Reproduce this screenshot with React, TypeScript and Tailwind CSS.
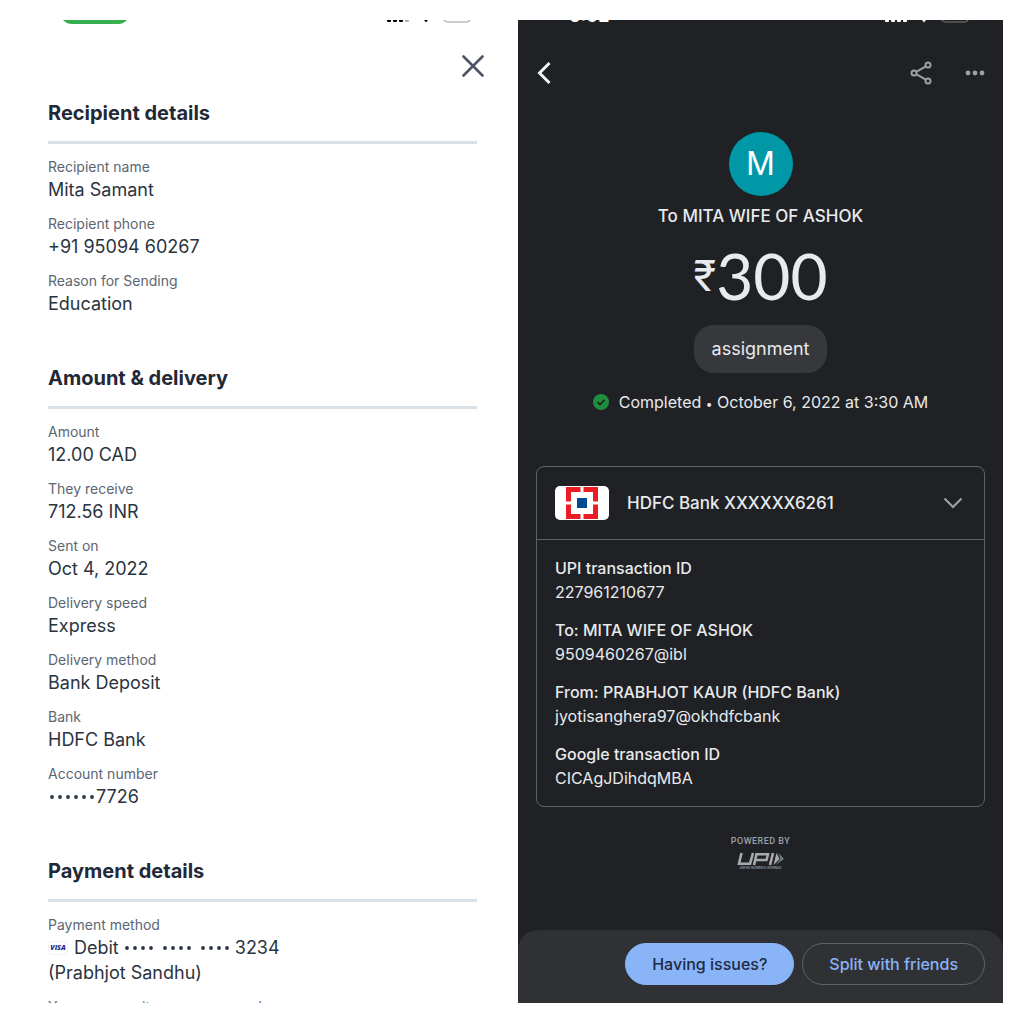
import type { ReactNode } from "react";

type Row = { label: string; value?: ReactNode };

const recipient: Row[] = [
  { label: "Recipient name", value: "Mita Samant" },
  { label: "Recipient phone", value: "+91 95094 60267" },
  { label: "Reason for Sending", value: "Education" },
];

const amount: Row[] = [
  { label: "Amount", value: "12.00 CAD" },
  { label: "They receive", value: "712.56 INR" },
  { label: "Sent on", value: "Oct 4, 2022" },
  { label: "Delivery speed", value: "Express" },
  { label: "Delivery method", value: "Bank Deposit" },
  { label: "Bank", value: "HDFC Bank" },
  {
    label: "Account number",
    value: (
      <span className="flex items-center">
        <Dots count={6} />
        7726
      </span>
    ),
  },
];

const payment: Row[] = [
  {
    label: "Payment method",
    value: (
      <>
        <span className="flex items-center">
          <span className="mr-1.5 flex h-3.5 w-5 items-center justify-center rounded-sm border border-[#f3f3f8] font-['Open_Sans'] text-[7px] leading-none font-extrabold text-[#28288c] italic">
            VISA
          </span>
          <span className="mr-1">Debit</span>
          <Dots count={4} />
          <span className="w-1.5" />
          <Dots count={4} />
          <span className="w-1.5" />
          <Dots count={4} />
          <span className="ml-1">3234</span>
        </span>
        <span className="block">(Prabhjot Sandhu)</span>
      </>
    ),
  },
  { label: "Your name as it appears on card" },
];

const transaction: Row[] = [
  { label: "UPI transaction ID", value: "227961210677" },
  { label: "To: MITA WIFE OF ASHOK", value: "9509460267@ibl" },
  { label: "From: PRABHJOT KAUR (HDFC Bank)", value: "jyotisanghera97@okhdfcbank" },
  { label: "Google transaction ID", value: "CICAgJDihdqMBA" },
];

function Dots({ count }: { count: number }) {
  return (
    <svg width={count * 8} height="8" viewBox={`0 0 ${count * 8} 8`} fill="currentColor" aria-hidden="true">
      {Array.from({ length: count }, (_, i) => (
        <circle key={i} cx={i * 8 + 4} cy="4" r="1.9" />
      ))}
    </svg>
  );
}

function StatusIcons({ full = false }: { full?: boolean }) {
  return (
    <svg width="86" height="12" viewBox="0 0 86 12" fill="currentColor" className="shrink-0" aria-hidden="true">
      <rect x="0" y="1" width="4" height="5" rx="1" />
      <rect x="6" y="0" width="4" height="6" rx="1" />
      <rect x="12" y="0" width="4" height="6" rx="1" />
      <rect x="18" y="0" width="4" height="6" rx="1" opacity={full ? 1 : 0.3} />
      <path d="M35.500 2 L42.500 2 L39 6.500 Z" />
      <rect x="56.500" y="-8" width="27" height="14" rx="4" fill="none" stroke="currentColor" opacity="0.4" />
    </svg>
  );
}

function Section({ title, rows }: { title: string; rows: Row[] }) {
  return (
    <section>
      <h2 className="border-b-3 border-[#d9e0e6] pb-3.5 text-xl leading-7 font-bold text-[#1f2937]">{title}</h2>
      <dl className="flex flex-col gap-3 pt-[13px]">
        {rows.map((row) => (
          <div key={row.label}>
            <dt className="text-sm leading-5 text-[#5b6672]">{row.label}</dt>
            {row.value && <dd className="text-lg leading-[25px] text-[#2a3440]">{row.value}</dd>}
          </div>
        ))}
      </dl>
    </section>
  );
}

function TransferPanel() {
  return (
    <main className="min-w-0 overflow-hidden bg-white px-7">
      <div className="flex h-2 items-end justify-between overflow-hidden pr-1 pl-3 text-black">
        <span className="mb-1 h-6 w-[70px] shrink-0 rounded-xl bg-[#34b04f]" />
        <StatusIcons />
      </div>
      <div className="-mr-2.5 flex justify-end pt-6">
        <button type="button" aria-label="Close" className="flex size-7 items-center justify-center text-[#4b5664]">
          <svg width="22" height="22" viewBox="0 0 22 22" fill="none" stroke="currentColor" strokeWidth="2.600" strokeLinecap="round">
            <path d="M1.500 1.500 L20.500 20.500 M20.500 1.500 L1.500 20.500" />
          </svg>
        </button>
      </div>
      <div className="flex flex-col gap-12 pt-[19px]">
        <Section title="Recipient details" rows={recipient} />
        <Section title="Amount &amp; delivery" rows={amount} />
        <Section title="Payment details" rows={payment} />
      </div>
    </main>
  );
}

function HdfcLogo() {
  return (
    <svg width="54" height="34" viewBox="0 0 54 34" className="shrink-0" aria-hidden="true">
      <rect width="54" height="34" rx="5" fill="#fff" />
      <rect x="11" y="1" width="32" height="32" fill="#ec1c24" />
      <rect x="16" y="6" width="22" height="22" fill="#fff" />
      <path d="M25.500 1 h3 v32 h-3 Z M11 15.500 h32 v3 h-32 Z" fill="#fff" />
      <rect x="22" y="12" width="10" height="10" fill="#004c8f" />
    </svg>
  );
}

function UpiLogo() {
  return (
    <svg width="50" height="15" viewBox="0 0 50 15" fill="none" role="img" aria-label="UPI">
      <g stroke="#a6a9ad" strokeWidth="2.600">
        <path d="M5.500 2 L3 12.700 H14 L17 2" />
        <path d="M18 14 L20.500 3.300 H32 L30.500 9 H20" />
        <path d="M37 2 L34 14" />
      </g>
      <path d="M40.500 2 L43.500 8 L37.500 14 Z" fill="#a6a9ad" />
      <path d="M42.500 2 L48 8 L39.500 14 L44.500 8 Z" fill="#6f8084" />
    </svg>
  );
}

function ReceiptPanel() {
  return (
    <article className="flex min-w-0 flex-col overflow-hidden bg-[#202124] text-[#e8eaed]">
      <div className="flex h-2 shrink-0 items-end justify-between overflow-hidden pr-8 pl-[51px] text-lg leading-6 font-semibold text-white">
        <span>6:02</span>
        <StatusIcons full />
      </div>
      <header className="flex shrink-0 items-center pt-[31px] pr-[18px] pl-4">
        <button type="button" aria-label="Back" className="flex h-7 w-5 items-center justify-center">
          <svg width="14" height="24" viewBox="0 0 14 24" fill="none" stroke="#f1f3f4" strokeWidth="3">
            <path d="M12.500 2 L2.500 12 L12.500 22" />
          </svg>
        </button>
        <button type="button" aria-label="Share" className="mr-8 ml-auto flex size-6 items-center justify-center text-[#9aa0a6]">
          <svg width="22" height="24" viewBox="0 0 22 24" fill="none" stroke="currentColor" strokeWidth="2">
            <circle cx="4" cy="12" r="2.500" />
            <circle cx="18" cy="4" r="2.500" />
            <circle cx="18" cy="20" r="2.500" />
            <path d="M6.200 10.800 L15.800 5.300 M6.200 13.200 L15.800 18.700" />
          </svg>
        </button>
        <button type="button" aria-label="More" className="flex h-6 w-5 items-center justify-center text-[#9aa0a6]">
          <svg width="20" height="6" viewBox="0 0 20 6" fill="currentColor">
            <circle cx="3" cy="3" r="2.400" />
            <circle cx="10" cy="3" r="2.400" />
            <circle cx="17" cy="3" r="2.400" />
          </svg>
        </button>
      </header>

      <section className="flex shrink-0 flex-col items-center pt-[45px]">
        <div className="flex size-16 items-center justify-center rounded-full bg-[#0097a7] text-[32px] leading-none text-white">M</div>
        <p className="pt-2 text-[17px] leading-6 font-medium">To MITA WIFE OF ASHOK</p>
        <p className="flex items-start pt-[15px] leading-[66px]">
          <span className="text-[42px]">₹</span>
          <span className="font-[Lato] text-[64px]">300</span>
        </p>
        <p className="mt-4 rounded-[20px] bg-[#37383b] px-[18px] py-3 text-lg leading-6">assignment</p>
        <p className="flex items-center gap-2.5 pt-[17px] text-base leading-6">
          <svg width="16" height="16" viewBox="0 0 16 16" aria-hidden="true">
            <circle cx="8" cy="8" r="8" fill="#1e8e3e" />
            <path d="M4.500 8.200 L7 10.600 L11.500 5.800" fill="none" stroke="#202124" strokeWidth="1.700" />
          </svg>
          <span>
            Completed <span className="text-xs">•</span> October 6, 2022 at 3:30 AM
          </span>
        </p>
      </section>

      <section className="mx-[18px] mt-[52px] shrink-0 rounded-lg border border-[#5f6368]">
        <button type="button" aria-expanded="true" className="flex w-full items-center border-b border-[#5f6368] py-[19px] pr-[21px] pl-[18px] text-left">
          <HdfcLogo />
          <span className="pl-[18px] text-[17px] leading-6 font-medium">HDFC Bank XXXXXX6261</span>
          <svg className="ml-auto" width="20" height="12" viewBox="0 0 20 12" fill="none" stroke="#9aa0a6" strokeWidth="2.200" aria-hidden="true">
            <path d="M1.500 1.500 L10 10 L18.500 1.500" />
          </svg>
        </button>
        <dl className="flex flex-col gap-3.5 px-[18px] py-4 text-base leading-6">
          {transaction.map((row) => (
            <div key={row.label}>
              <dt className="font-medium">{row.label}</dt>
              <dd>{row.value}</dd>
            </div>
          ))}
        </dl>
      </section>

      <div className="flex shrink-0 flex-col items-center pt-7 font-[Roboto] text-[#9aa0a6]">
        <p className="pb-1 text-[9px] leading-3 font-medium tracking-wider">POWERED BY</p>
        <UpiLogo />
        <p className="text-[3px] leading-1 font-medium italic">UNIFIED PAYMENTS INTERFACE</p>
      </div>

      <footer className="mt-auto flex shrink-0 justify-end gap-2 rounded-t-[20px] bg-[#303134] px-[18px] pt-[13px] pb-[18px] text-base leading-6 font-medium">
        <button type="button" className="rounded-full border border-[#8ab4f8] bg-[#8ab4f8] px-[26px] py-2 text-[#202a44]">
          Having issues?
        </button>
        <button type="button" className="rounded-full border border-[#5f6368] px-[26px] py-2 text-[#8ab4f8]">
          Split with friends
        </button>
      </footer>
    </article>
  );
}

export default function App() {
  return (
    <div className="grid h-screen grid-cols-2 grid-rows-1 gap-[13px] bg-white pt-5 pr-[21px] pb-[21px] pl-5 font-[Inter,sans-serif]">
      <TransferPanel />
      <ReceiptPanel />
    </div>
  );
}
